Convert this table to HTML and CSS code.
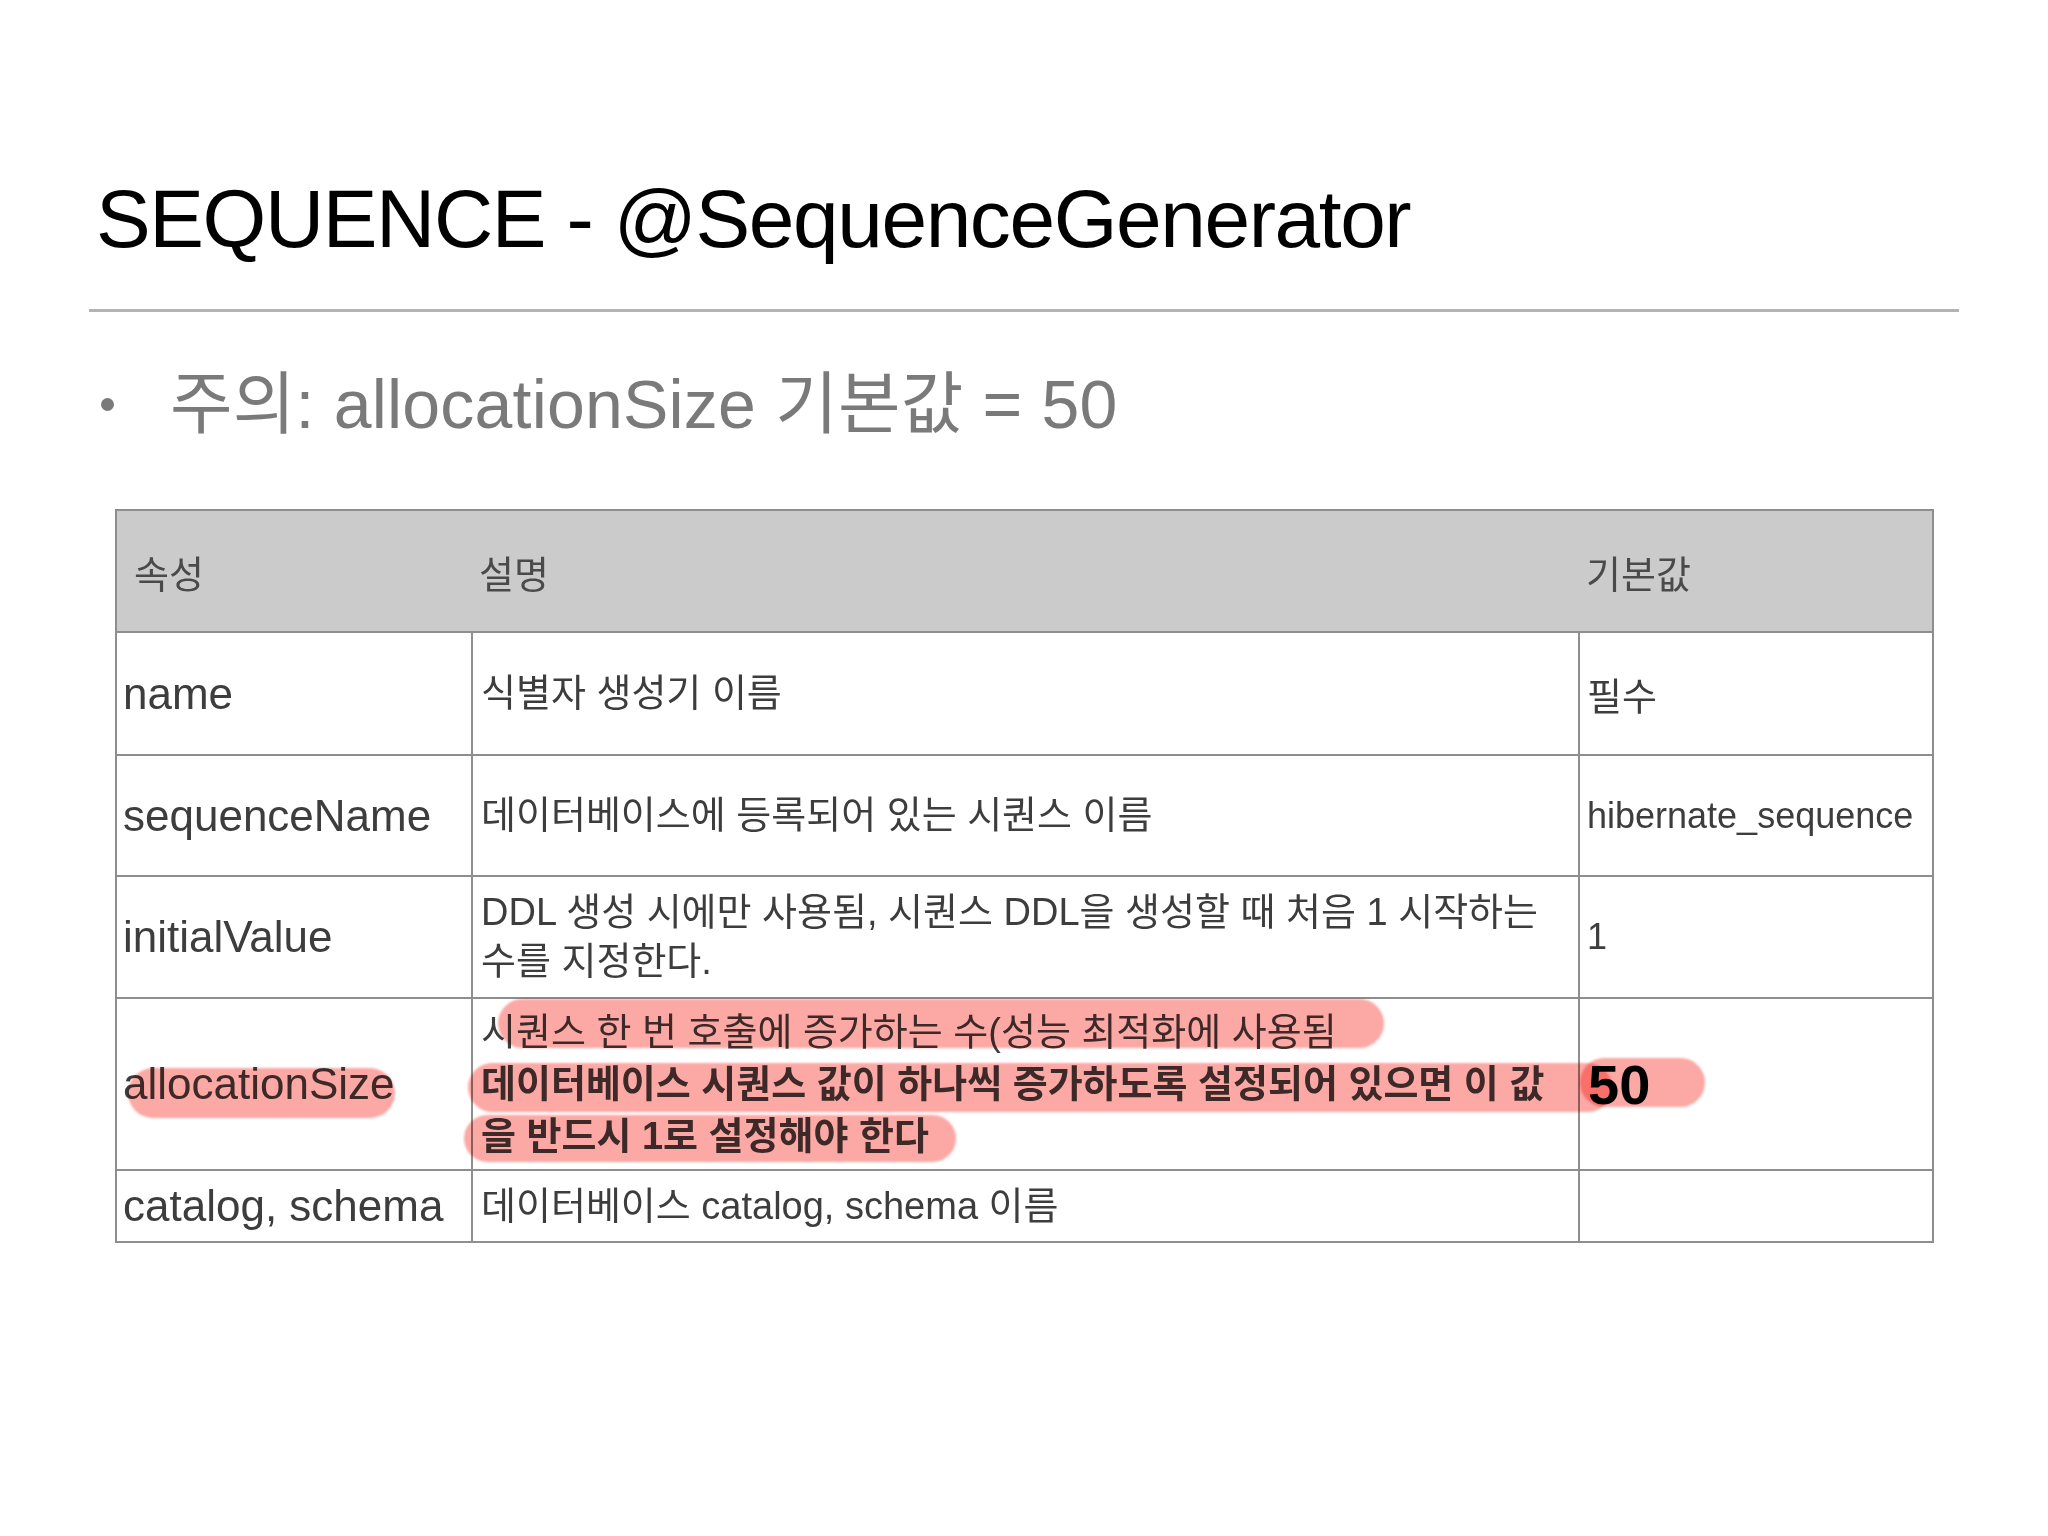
FILE: index.html
```html
<!DOCTYPE html>
<html lang="ko">
<head>
<meta charset="utf-8">
<title>SEQUENCE - @SequenceGenerator</title>
<link rel="stylesheet" href="styles.css">
</head>
<body>
<div class="slide">
  <h1 class="title">SEQUENCE - @SequenceGenerator</h1>
  <div class="rule"></div>
  <div class="bullet"><span class="dot"></span><span class="btext">주의: allocationSize 기본값 = 50</span></div>
  <div class="table-wrap">
    <table class="props">
      <colgroup><col class="c1"><col class="c2"><col class="c3"></colgroup>
      <thead>
        <tr class="r-head"><th class="first">속성</th><th>설명</th><th class="last">기본값</th></tr>
      </thead>
      <tbody>
        <tr class="r1"><td class="k">name</td><td class="d">식별자 생성기 이름</td><td class="v-ko">필수</td></tr>
        <tr class="r2"><td class="k">sequenceName</td><td class="d">데이터베이스에 등록되어 있는 시퀀스 이름</td><td class="v">hibernate_sequence</td></tr>
        <tr class="r3"><td class="k">initialValue</td><td class="d">DDL 생성 시에만 사용됨, 시퀀스 DDL을 생성할 때 처음 1 시작하는<br>수를 지정한다.</td><td class="v">1</td></tr>
        <tr class="r4"><td class="k">allocationSize</td><td class="d">시퀀스 한 번 호출에 증가하는 수(성능 최적화에 사용됨<br><b class="strong">데이터베이스 시퀀스 값이 하나씩 증가하도록 설정되어 있으면 이 값</b><br><b class="strong">을 반드시 1로 설정해야 한다</b></td><td class="big">50</td></tr>
        <tr class="r5"><td class="k">catalog, schema</td><td class="d">데이터베이스 catalog, schema 이름</td><td class="v"></td></tr>
      </tbody>
    </table>
    <span class="hl hl-alloc"></span>
    <span class="hl hl-line1"></span>
    <span class="hl hl-line2"></span>
    <span class="hl hl-fifty"></span>
    <span class="hl hl-line3"></span>
  </div>
</div>
</body>
</html>
```
FILE: styles.css
```css
* { box-sizing: border-box; }
html, body { margin: 0; padding: 0; background: #fff; }
body { font-family: "Liberation Sans", "Noto Sans CJK KR", sans-serif; }

.slide { width: 2048px; height: 1536px; overflow: hidden; background: #fff; }

.title {
  margin: 0;
  padding: 178px 0 0 96px;
  font-size: 82px;
  line-height: 82px;
  font-weight: 400;
  color: #000;
  letter-spacing: -1.4px;
  white-space: nowrap;
}

.rule {
  margin: 49px 0 0 89px;
  width: 1870px;
  height: 3px;
  background: #b3b3b3;
}

.bullet {
  display: flex;
  align-items: center;
  margin-top: 58px;
  height: 68px;
  color: #7a7a7a;
  font-size: 68px;
  line-height: 68px;
  letter-spacing: 0.2px;
  white-space: nowrap;
}
.dot {
  width: 13px;
  height: 13px;
  border-radius: 50%;
  background: #7a7a7a;
  margin-left: 101px;
  margin-right: 56px;
  flex: none;
}

.table-wrap {
  position: relative;
  margin: 71px 0 0 115px;
  width: 1817px;
}
.props {
  border-collapse: collapse;
  table-layout: fixed;
  width: 1817px;
  color: #3d3d3d;
}
.c1 { width: 356px; }
.c2 { width: 1107px; }
.c3 { width: 354px; }

.props td, .props th {
  border: 2px solid #8e8e8e;
  padding: 0 10px 0 9px;
  vertical-align: middle;
  text-align: left;
  font-weight: 400;
  white-space: nowrap;
}
.props th {
  background: #cbcbcb;
  font-size: 38px;
  color: #4a4a4a;
  border-left: none;
  border-right: none;
  padding-left: 7px;
}
.props th.first { border-left: 2px solid #8e8e8e; padding-left: 17px; }
.props th.last { border-right: 2px solid #8e8e8e; padding-left: 7px; }

.r-head { height: 122px; }
.r1 { height: 123px; }
.r2 { height: 121px; }
.r3 { height: 122px; }
.r4 { height: 172px; }
.r5 { height: 72px; }

.props td.k { font-size: 44px; padding-left: 6px; }
.props td.d { font-size: 38px; line-height: 49px; padding-left: 8px; }
.r4 td.d { line-height: 52px; }
.props td.v { font-size: 36px; padding-left: 7px; }
.props td.v-ko { font-size: 38px; padding-left: 7px; }
.props td.big { font-size: 56px; font-weight: 700; color: #000; padding-left: 8px; }
.strong { font-weight: 700; }

.hl {
  position: absolute;
  background: #fca8a4;
  border-radius: 999px;
  mix-blend-mode: multiply;
  filter: blur(0.8px);
  pointer-events: none;
}
.hl-alloc { left: 13px; top: 559px; width: 267px; height: 50px; }
.hl-line1 { left: 383px; top: 490px; width: 886px; height: 49px; }
.hl-line2 { left: 353px; top: 554px; width: 1144px; height: 49px; }
.hl-fifty { left: 1465px; top: 549px; width: 125px; height: 49px; }
.hl-line3 { left: 349px; top: 606px; width: 492px; height: 47px; }
```
